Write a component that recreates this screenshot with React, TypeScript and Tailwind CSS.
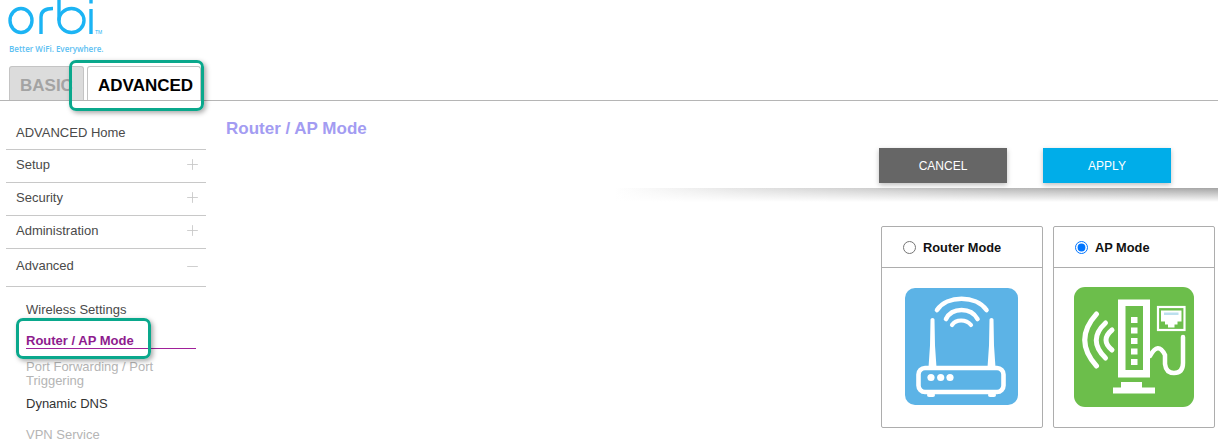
import React from "react";
import { Minus, Plus } from "lucide-react";

function OrbiLogo() {
  return (
    <svg className="block" width="94" height="36" viewBox="0 0 94 36" fill="none" stroke="#1cb4f4" strokeWidth="3.400">
      <ellipse cx="21" cy="20.500" rx="11" ry="12" />
      <path d="M41 34V17C41 11 45 8.500 53 8.500" />
      <path d="M59 -2V20.500" />
      <ellipse cx="71.500" cy="20.500" rx="12.500" ry="12" />
      <path d="M91 9V34" />
      <path d="M91 -2V3.500" />
    </svg>
  );
}

function RouterIcon() {
  return (
    <svg className="block" width="113" height="117" viewBox="0 0 113 117" fill="none">
      <rect width="113" height="117" rx="10" fill="#5cb3e6" />
      <g stroke="#fff" strokeLinecap="round">
        <path d="M32 22C42 7 71 7 81.500 22" strokeWidth="4.600" />
        <path d="M41 31C47 19 66 19 72.500 31" strokeWidth="4.600" />
        <path d="M47 37C51 31 61 31 66 37" strokeWidth="4.200" />
      </g>
      <path d="M25.500 31.500Q25.500 30 27.500 30T29.500 31.500l.5 26 1.500 22h-8l1.500-22z" fill="#fff" />
      <path d="M84.500 31.500Q84.500 30 86.500 30T88.500 31.500l.5 26 1.500 22h-8l1.500-22z" fill="#fff" />
      <rect x="13.5" y="80" width="85" height="24" rx="6.500" stroke="#fff" strokeWidth="4.600" />
      <circle cx="26" cy="89.5" r="3.600" fill="#fff" />
      <circle cx="35.7" cy="89.5" r="3.600" fill="#fff" />
      <circle cx="45" cy="89.5" r="3.600" fill="#fff" />
      <rect x="22" y="105" width="8" height="4" rx="2" fill="#fff" />
      <rect x="83" y="105" width="8" height="4" rx="2" fill="#fff" />
    </svg>
  );
}

function ApIcon() {
  return (
    <svg className="-mt-[1px] block" width="120" height="120" viewBox="0 0 120 120" fill="none">
      <rect width="120" height="120" rx="11" fill="#6cbe4b" />
      <path d="M44 12.5h32v78H44zM51.5 19v64H69V19z" fill="#fff" fillRule="evenodd" />
      <g fill="#fff">
        <rect x="57" y="30" width="6.500" height="6" />
        <rect x="57" y="40.500" width="6.500" height="6" />
        <rect x="57" y="51" width="6.500" height="6" />
        <rect x="57" y="61.500" width="6.500" height="6" />
        <rect x="57" y="72" width="6.500" height="6" />
        <path d="M47 95h21v5.500h13v6H39v-6h8z" />
      </g>
      <g stroke="#fff" strokeLinecap="round" strokeWidth="5">
        <path d="M22.500 27Q-1 53 22.500 79" />
        <path d="M31.500 36Q13 53 31.500 71" />
        <path d="M38 43Q26 53 38 63" />
      </g>
      <path d="M76 69Q84 54 91 68V77Q92 86 100 86Q109 86 109 76V50" stroke="#fff" strokeLinecap="round" strokeWidth="4.500" />
      <rect x="84" y="20" width="26.500" height="23" stroke="#fff" strokeWidth="2.200" />
      <path d="M87 23.500h20.500v11h-4v3h-3v3h-6.500v-3h-3v-3h-4z" fill="#fff" />
      <rect x="90" y="25.500" width="14.500" height="2.500" fill="#bcdfee" />
    </svg>
  );
}

function MenuRow({ label, open, className }: { label: string; open?: boolean; className: string }) {
  return (
    <div className={`flex items-center justify-between border-b border-[#c8c8c8] pr-[5px] pb-[3px] pl-[10px] text-[13px] text-[#4a4a4a] ${className}`}>
      <span>{label}</span>
      {open ? (
        <Minus size={17} strokeWidth={1.2} className="text-[#c6c6c6]" />
      ) : (
        <Plus size={17} strokeWidth={1.2} className="text-[#c6c6c6]" />
      )}
    </div>
  );
}

function ModeCard({ label, checked, children, className }: { label: string; checked?: boolean; children: React.ReactNode; className: string }) {
  return (
    <div className={`h-[202px] rounded-[2px] border border-[#adadad] ${className}`}>
      <div className="flex h-[41px] items-center gap-[7px] border-b border-[#adadad] pl-[21px] text-[12.8px] font-bold text-[#111]">
        <input type="radio" readOnly checked={!!checked} className="m-0 h-[13px] w-[13px]" />
        <span className="pt-[2px]">{label}</span>
      </div>
      <div className="flex justify-center pt-[20px]">{children}</div>
    </div>
  );
}

export default function App() {
  return (
    <div className="relative h-[439px] w-[1218px] overflow-hidden bg-white font-['Liberation_Sans',Arial,sans-serif]">
      <header className="relative flex h-[101px] flex-col border-b border-[#b5b5b5]">
        <div className="flex items-end">
          <OrbiLogo />
          <span className="mb-[1px] ml-[1px] text-[5px] leading-none text-[#1cb4f4]">TM</span>
        </div>
        <div className="mt-[8px] ml-[9px] font-['Open_Sans',sans-serif] text-[8px] leading-[10px] font-semibold text-[#5cc0f2]">Better WiFi. Everywhere.</div>
        <div className="mt-auto ml-[9px] flex gap-[3px]">
          <div className="flex h-[34px] w-[75px] items-center rounded-t-[3px] border border-b-0 border-[#c4c4c4] bg-[#dcdcdc] pt-[4px] pl-[10px] text-[17px] font-bold text-[#a3a3a3]">
            BASIC
          </div>
          <div className="flex h-[34px] w-[114px] items-center rounded-t-[3px] border border-b-0 border-[#c4c4c4] bg-white pt-[4px] pl-[10px] text-[17px] font-bold text-black">
            ADVANCED
          </div>
        </div>
      </header>

      <div className="flex">
        <aside className="ml-[6px] w-[200px] shrink-0">
          <div className="flex h-[49px] items-end border-b border-[#c8c8c8] pb-[7px] pl-[10px] text-[13px] text-[#4a4a4a]">ADVANCED Home</div>
          <MenuRow label="Setup" className="h-[33px]" />
          <MenuRow label="Security" className="h-[33px]" />
          <MenuRow label="Administration" className="h-[33px]" />
          <MenuRow label="Advanced" open className="h-[38px]" />
          <div className="pt-[15px] pl-[20px] text-[13px]">
            <div className="h-[16px] leading-[16px] text-[#4a4a4a]">Wireless Settings</div>
            <div className="mt-[15px] h-[16px] w-[170px] border-b border-[#a0209a] text-[13px] leading-[16px] font-bold text-[#8e1b8e]">Router / AP Mode</div>
            <div className="mt-[11px] w-[150px] leading-[14px] text-[#b5b5b5]">Port Forwarding / Port Triggering</div>
            <div className="mt-[8px] h-[16px] leading-[16px] text-[#333]">Dynamic DNS</div>
            <div className="mt-[15px] h-[16px] leading-[16px] text-[#b5b5b5]">VPN Service</div>
          </div>
        </aside>

        <main className="min-w-0 flex-1 pl-[20px]">
          <h1 className="mt-[19px] text-[17px] leading-[18px] font-bold text-[#a39cf2]">Router / AP Mode</h1>
          <div className="mt-[10px] flex justify-end gap-[36px] pr-[47px]">
            <button className="h-[35px] w-[128px] bg-[#666666] text-[12px] text-white shadow-[0_2px_5px_rgba(0,0,0,0.25)]">CANCEL</button>
            <button className="h-[35px] w-[128px] bg-[#00ade9] text-[12px] text-white shadow-[0_2px_5px_rgba(0,0,0,0.25)]">APPLY</button>
          </div>
          <div className="mt-[5px] ml-[389px] h-[14px] bg-[linear-gradient(to_bottom,rgba(255,255,255,0.1),#fff),linear-gradient(to_right,#fff,#dcdcdc_25%,#b4b4b4_60%,#9a9a9a)]" />
          <div className="mt-[24px] flex justify-end gap-[10px] pr-[3px]">
            <ModeCard label="Router Mode" className="w-[162px]">
              <div className="mr-[1px]">
                <RouterIcon />
              </div>
            </ModeCard>
            <ModeCard label="AP Mode" checked className="w-[162px]">
              <ApIcon />
            </ModeCard>
          </div>
        </main>
      </div>

      {/* green annotation boxes drawn over the screenshot */}
      <div className="absolute top-[60px] left-[69px] h-[51px] w-[135px] rounded-[7px] border-[3px] border-[#0aa88c] shadow-[2px_2px_5px_rgba(0,0,0,0.35)]" />
      <div className="absolute top-[318px] left-[16px] h-[41px] w-[135px] rounded-[7px] border-[3px] border-[#0aa88c] shadow-[2px_2px_5px_rgba(0,0,0,0.35)]" />
    </div>
  );
}
